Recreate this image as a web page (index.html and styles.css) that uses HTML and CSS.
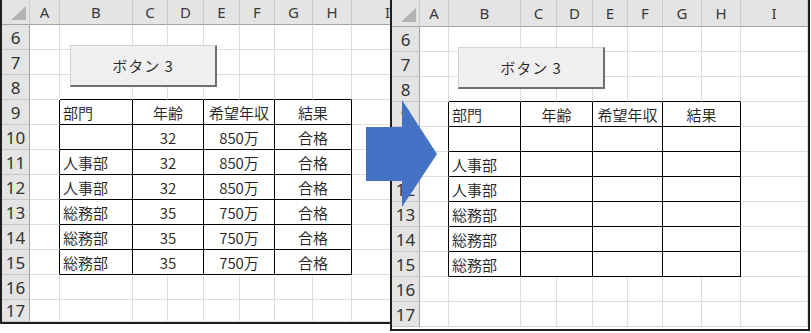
FILE: index.html
```html
<!DOCTYPE html>
<html lang="ja">
    <head>
        <meta charset="UTF-8">
        <meta name="viewport" content="width=device-width, initial-scale=1.0">
        <link rel="stylesheet" href="styles.css">
        <title>ボタン 3</title>
    </head>
    <body>
        <div class="screen">

            <!-- before: macro run -->
            <div class="sheet sheet-left">
                <div class="c ch corner"></div><div class="c ch">A</div><div class="c ch">B</div><div class="c ch">C</div><div class="c ch">D</div><div class="c ch">E</div><div class="c ch">F</div><div class="c ch">G</div><div class="c ch">H</div><div class="c ch">I</div>

                <div class="c rh">6</div><div class="c"></div><div class="c"></div><div class="c"></div><div class="c"></div><div class="c"></div><div class="c"></div><div class="c"></div><div class="c"></div><div class="c"></div>
                <div class="c rh">7</div><div class="c"></div><div class="c"></div><div class="c"></div><div class="c"></div><div class="c"></div><div class="c"></div><div class="c"></div><div class="c"></div><div class="c"></div>
                <div class="c rh">8</div><div class="c"></div><div class="c tt"></div><div class="c tt"></div><div class="c tt"></div><div class="c tt"></div><div class="c tt"></div><div class="c tt"></div><div class="c tt"></div><div class="c"></div>

                <div class="c rh">9</div><div class="c tl"></div><div class="c t tx">部門</div><div class="c t span2">年齢</div><div class="c t span2">希望年収</div><div class="c t span2">結果</div><div class="c"></div>
                <div class="c rh">10</div><div class="c tl"></div><div class="c t tx"></div><div class="c t span2">32</div><div class="c t span2">850万</div><div class="c t span2">合格</div><div class="c"></div>
                <div class="c rh">11</div><div class="c tl"></div><div class="c t tx">人事部</div><div class="c t span2">32</div><div class="c t span2">850万</div><div class="c t span2">合格</div><div class="c"></div>
                <div class="c rh">12</div><div class="c tl"></div><div class="c t tx">人事部</div><div class="c t span2">32</div><div class="c t span2">850万</div><div class="c t span2">合格</div><div class="c"></div>
                <div class="c rh">13</div><div class="c tl"></div><div class="c t tx">総務部</div><div class="c t span2">35</div><div class="c t span2">750万</div><div class="c t span2">合格</div><div class="c"></div>
                <div class="c rh">14</div><div class="c tl"></div><div class="c t tx">総務部</div><div class="c t span2">35</div><div class="c t span2">750万</div><div class="c t span2">合格</div><div class="c"></div>
                <div class="c rh">15</div><div class="c tl"></div><div class="c t tx">総務部</div><div class="c t span2">35</div><div class="c t span2">750万</div><div class="c t span2">合格</div><div class="c"></div>

                <div class="c rh">16</div><div class="c"></div><div class="c"></div><div class="c"></div><div class="c"></div><div class="c"></div><div class="c"></div><div class="c"></div><div class="c"></div><div class="c"></div>
                <div class="c rh">17</div><div class="c"></div><div class="c"></div><div class="c"></div><div class="c"></div><div class="c"></div><div class="c"></div><div class="c"></div><div class="c"></div><div class="c"></div>

                <button class="btn btn-left" type="button">ボタン 3</button>
            </div>

            <!-- after: macro run -->
            <div class="sheet sheet-right">
                <div class="c ch corner"></div><div class="c ch">A</div><div class="c ch">B</div><div class="c ch">C</div><div class="c ch">D</div><div class="c ch">E</div><div class="c ch">F</div><div class="c ch">G</div><div class="c ch">H</div><div class="c ch">I</div>

                <div class="c rh">6</div><div class="c"></div><div class="c"></div><div class="c"></div><div class="c"></div><div class="c"></div><div class="c"></div><div class="c"></div><div class="c"></div><div class="c"></div>
                <div class="c rh">7</div><div class="c"></div><div class="c"></div><div class="c"></div><div class="c"></div><div class="c"></div><div class="c"></div><div class="c"></div><div class="c"></div><div class="c"></div>
                <div class="c rh">8</div><div class="c"></div><div class="c tt"></div><div class="c tt"></div><div class="c tt"></div><div class="c tt"></div><div class="c tt"></div><div class="c tt"></div><div class="c tt"></div><div class="c"></div>

                <div class="c rh">9</div><div class="c tl"></div><div class="c t tx">部門</div><div class="c t span2">年齢</div><div class="c t span2">希望年収</div><div class="c t span2">結果</div><div class="c"></div>
                <div class="c rh">10</div><div class="c tl"></div><div class="c t tx"></div><div class="c t span2"></div><div class="c t span2"></div><div class="c t span2"></div><div class="c"></div>
                <div class="c rh">11</div><div class="c tl"></div><div class="c t tx">人事部</div><div class="c t span2"></div><div class="c t span2"></div><div class="c t span2"></div><div class="c"></div>
                <div class="c rh">12</div><div class="c tl"></div><div class="c t tx">人事部</div><div class="c t span2"></div><div class="c t span2"></div><div class="c t span2"></div><div class="c"></div>
                <div class="c rh">13</div><div class="c tl"></div><div class="c t tx">総務部</div><div class="c t span2"></div><div class="c t span2"></div><div class="c t span2"></div><div class="c"></div>
                <div class="c rh">14</div><div class="c tl"></div><div class="c t tx">総務部</div><div class="c t span2"></div><div class="c t span2"></div><div class="c t span2"></div><div class="c"></div>
                <div class="c rh">15</div><div class="c tl"></div><div class="c t tx">総務部</div><div class="c t span2"></div><div class="c t span2"></div><div class="c t span2"></div><div class="c"></div>

                <div class="c rh">16</div><div class="c"></div><div class="c"></div><div class="c"></div><div class="c"></div><div class="c"></div><div class="c"></div><div class="c"></div><div class="c"></div><div class="c"></div>
                <div class="c rh">17</div><div class="c"></div><div class="c"></div><div class="c"></div><div class="c"></div><div class="c"></div><div class="c"></div><div class="c"></div><div class="c"></div><div class="c"></div>

                <button class="btn btn-right" type="button">ボタン 3</button>
            </div>

            <svg class="arrow" width="811" height="333" viewBox="0 0 811 333">
                <polygon points="366,127 402,127 402,100 437,154 402,207 402,181 366,181" fill="#4472c4"/>
            </svg>
        </div>
    </body>
</html>
```

FILE: styles.css
```css
body {
    margin: 0;
    background: #fff;
    font-family: "Noto Sans CJK JP", "Noto Sans", sans-serif;
    color: #222;
}

.screen {
    position: relative;
    display: flex;
    align-items: flex-start;
    width: 811px;
    height: 333px;
    overflow: hidden;
}

.sheet {
    position: relative;
    display: grid;
    overflow: hidden;
    background: #fff;
    box-sizing: border-box;
    flex-shrink: 0;
}

.sheet-left {
    width: 390px;
    border-left: 2px solid #1e1e1e;
    border-bottom: 2px solid #1e1e1e;
    grid-template-columns: 28px 30px 73px 35px 36px 36px 35px 38px 39px 72px;
    grid-template-rows: 25px repeat(11, 25px) 22px;
}

.sheet-right {
    width: 420px;
    border: 2px solid #1e1e1e;
    border-top: none;
    padding-bottom: 2px;
    grid-template-columns: 28px 29px 72px 36px 36px 35px 35px 39px 39px 67px;
    grid-template-rows: 27px repeat(12, 25px);
}

.c {
    box-sizing: border-box;
    display: flex;
    align-items: center;
    justify-content: center;
    border-right: 1px solid #dcdcdc;
    border-bottom: 1px solid #dcdcdc;
    font-size: 15px;
    font-weight: 350;
    white-space: nowrap;
    min-width: 0;
}

.ch {
    background: #e4e4e4;
    border-right-color: #cbcbcb;
    border-bottom-color: #a3a3a3;
    color: #3a3a3a;
    font-family: "Noto Sans", sans-serif;
    font-size: 15px;
    font-weight: 400;
}

.rh {
    background: #e4e4e4;
    border-right-color: #a3a3a3;
    border-bottom-color: #c9c9c9;
    color: #333;
    font-family: "Noto Sans", sans-serif;
    font-size: 17px;
    font-weight: 400;
}

.corner {
    position: relative;
}

.corner::after {
    content: "";
    position: absolute;
    right: 3px;
    bottom: 4px;
    width: 15px;
    height: 14px;
    background: #b3b3b3;
    clip-path: polygon(100% 0, 100% 100%, 0 100%);
}

.span2 {
    grid-column: span 2;
}

.tt {
    border-bottom-color: #000;
}

.tl {
    border-right-color: #000;
}

.t {
    border-right-color: #000;
    border-bottom-color: #000;
    color: #222;
}

.tx {
    justify-content: flex-start;
    padding-left: 3px;
}

.btn {
    position: absolute;
    height: 42px;
    box-sizing: border-box;
    margin: 0;
    padding: 0;
    background: #efefef;
    border: 1px solid #d2d2d2;
    border-right: 2px solid #6f6f6f;
    border-bottom: 2px solid #6f6f6f;
    font-family: "Noto Sans CJK JP", sans-serif;
    font-size: 15px;
    font-weight: 350;
    letter-spacing: 1px;
    color: #222;
}

.btn-left {
    left: 68px;
    top: 45px;
    width: 147px;
}

.btn-right {
    left: 66px;
    top: 47px;
    width: 147px;
}

.arrow {
    position: absolute;
    left: 0;
    top: 0;
    pointer-events: none;
}
```
